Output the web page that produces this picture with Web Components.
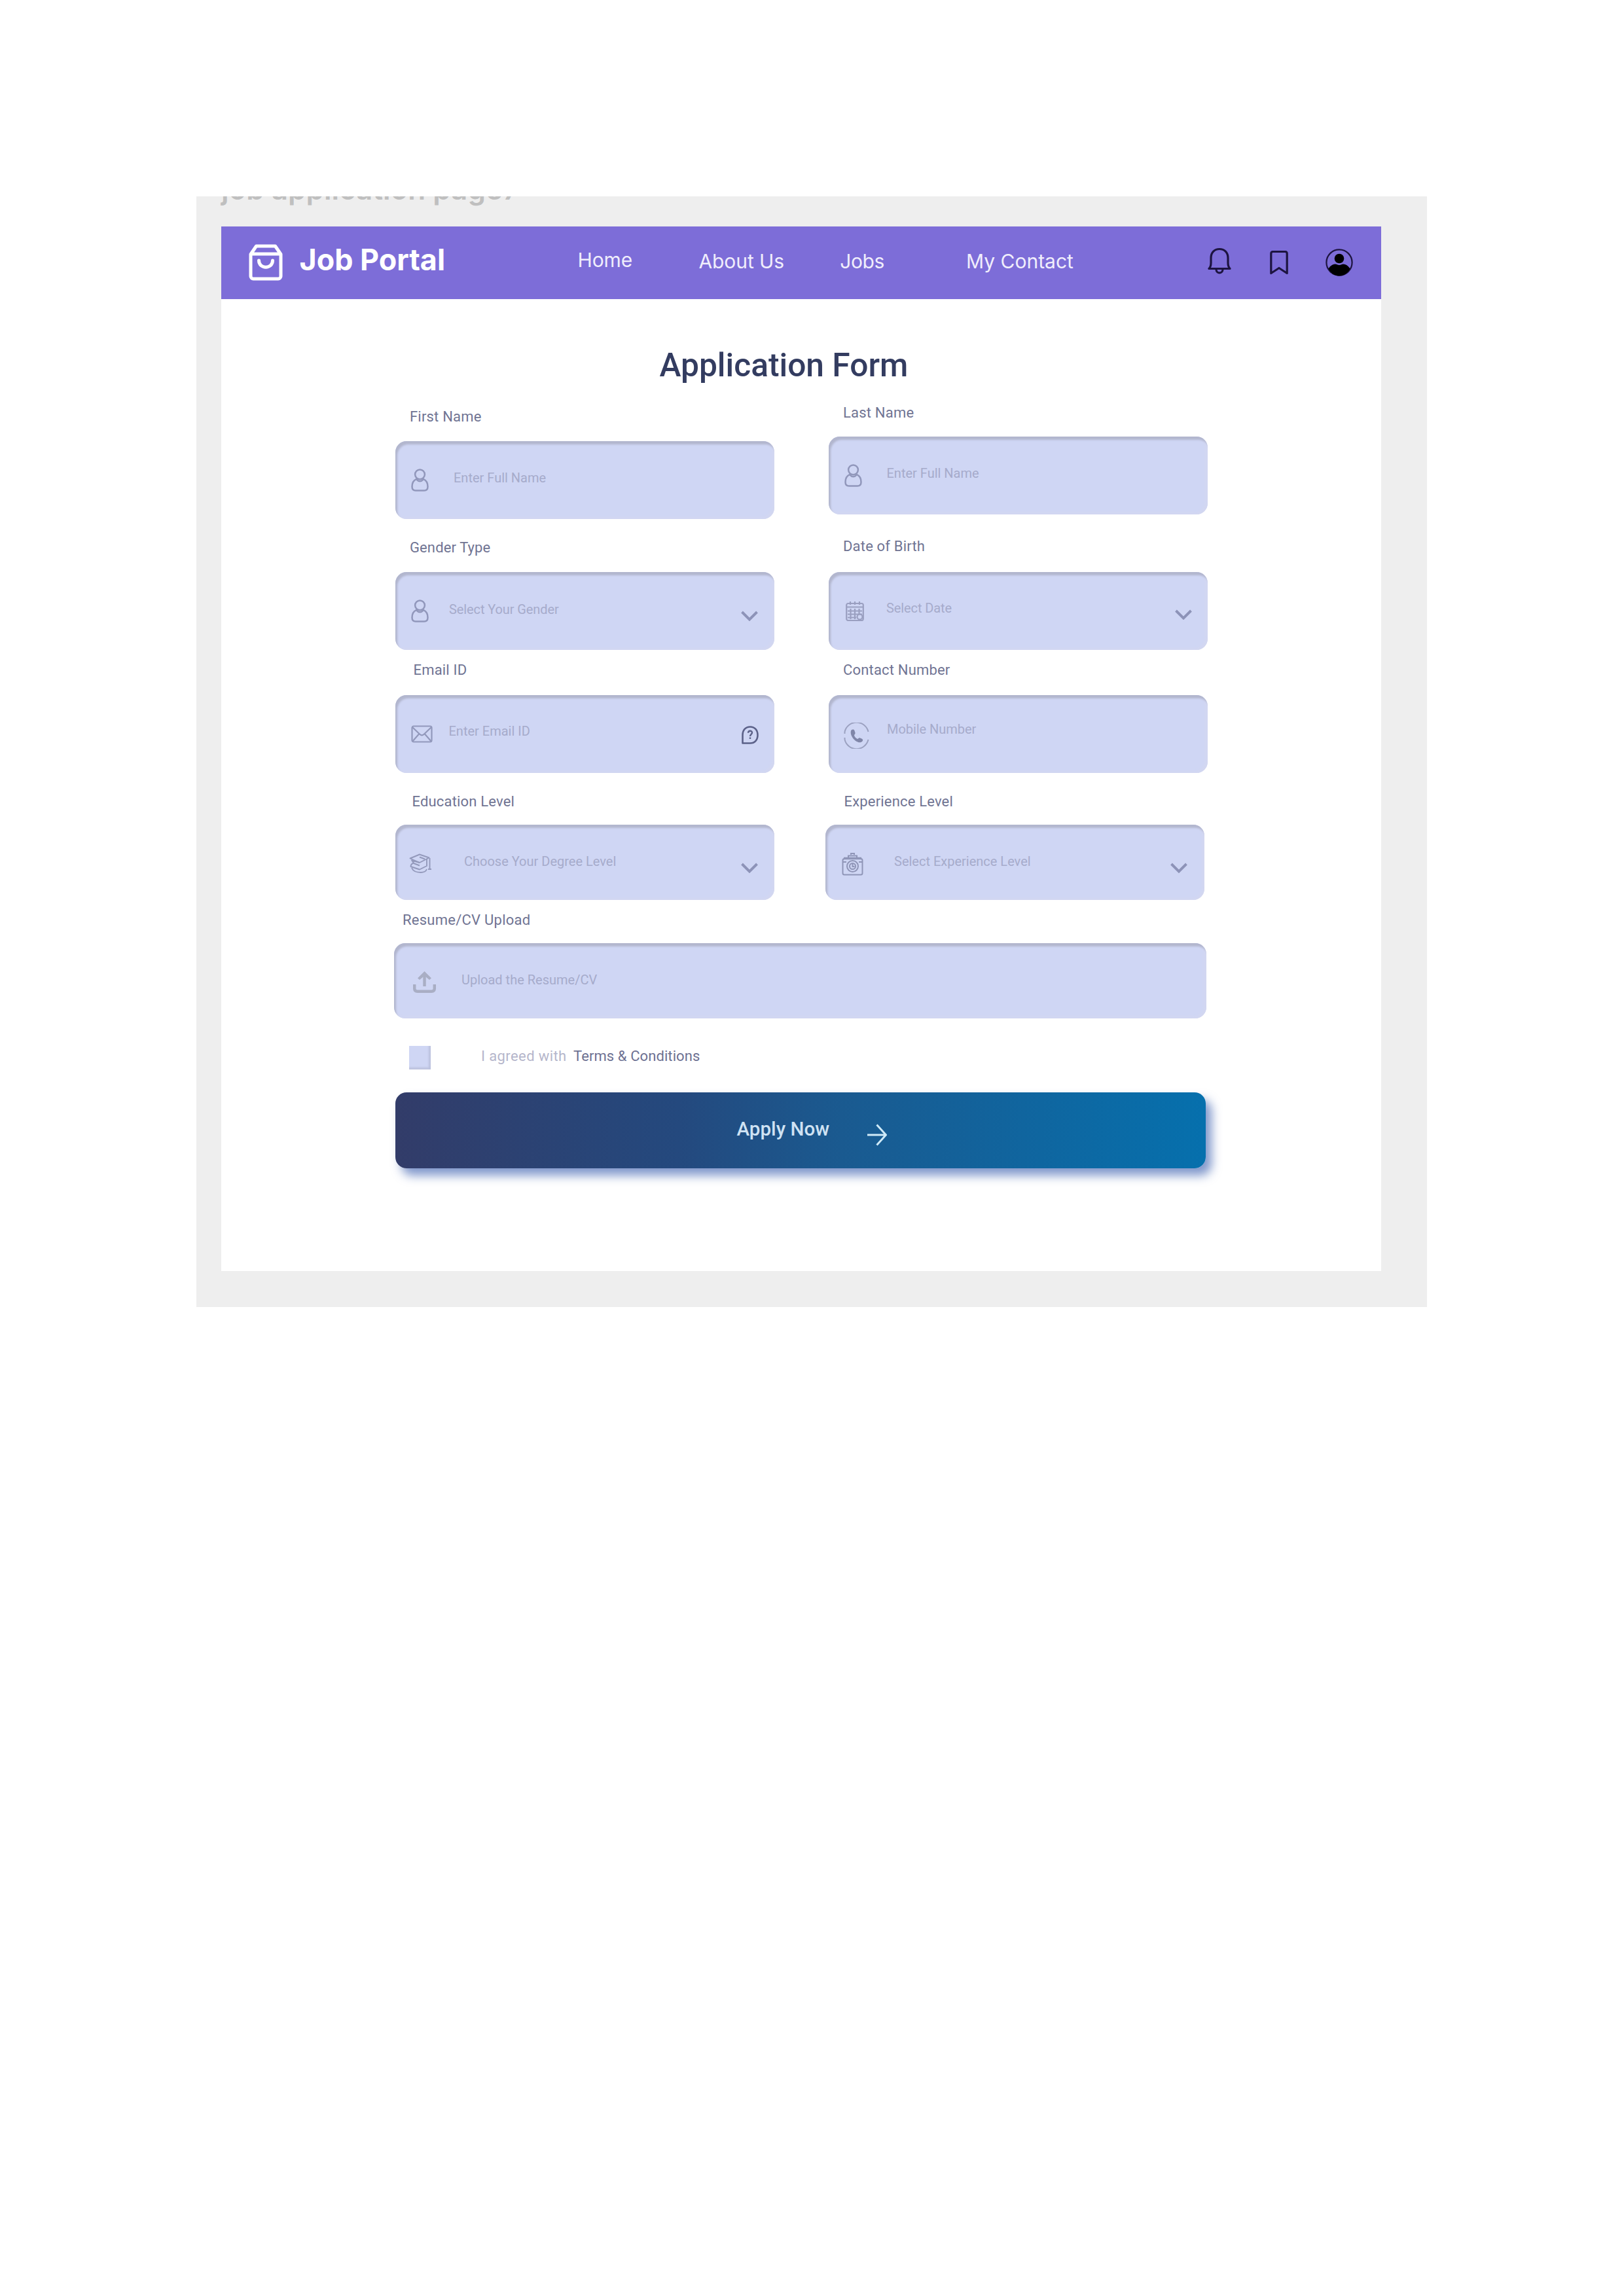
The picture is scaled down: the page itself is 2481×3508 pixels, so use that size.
<!DOCTYPE html>
<html lang="en">
<head>
<meta charset="utf-8">
<title>Job Portal</title>
<style>
html,body{margin:0;background:#fff}
body{width:2481px;height:3508px;overflow:hidden;font-family:Roboto,"Liberation Sans",sans-serif}
</style>
</head>
<body>
<portal-page></portal-page>
<script>
const ICONS = {
  bag: ['0 0 52 56', `<g fill="none" stroke="#fff" stroke-width="5" stroke-linejoin="round" stroke-linecap="round"><path d="M3 15.5 11.5 3h29L49 15.500V49a4 4 0 0 1-4 4H7a4 4 0 0 1-4-4zM3.500 15h45M15.500 25c0 13.500 21 13.500 21 0"/></g>`],
  bell: ['0 0 36 41', `<g fill="none" stroke="#1d1440" stroke-width="3.200" stroke-linejoin="round" stroke-linecap="round"><path d="M2 32.500h32c-3-3-3-6-3-9V16C31 7.500 25.500 2.500 18 2.500S5 7.500 5 16v7.500c0 3 0 6-3 9z"/><path d="M13 34c.5 6.500 9.500 6.500 10 0"/></g>`],
  bookmark: ['0 0 28 37', `<path fill="none" stroke="#1d1440" stroke-width="3.200" stroke-linejoin="round" d="M1.800 34.500V4.500c0-2 1-3 3-3h18.400c2 0 3 1 3 3v30L14 26.500z"/>`],
  account: ['0 0 42 44', `<circle cx="21" cy="22" r="19.600" fill="none" stroke="#1d1440" stroke-width="2.200"/><circle cx="21" cy="16" r="7.300" fill="#000"/><path fill="#000" d="M4.500 31.500c3-4.500 6.500-7 10.500-7 2 0 3.500 1.500 6 1.500s4-1.500 6-1.500c4 0 7.500 2.500 10.500 7C34 38.500 28 42.500 21 42.500S8 38.500 4.500 31.500z"/>`],
  user: ['0 0 27 35', `<g fill="none" stroke="#9197bb" stroke-width="2.500"><circle cx="13.500" cy="8.800" r="7.400"/><path d="M8 16.200C4 18 1.500 22 1.500 27.500c0 4 2 6 5.500 6h13c3.500 0 5.500-2 5.500-6 0-5.500-2.500-9.500-6.500-11.300-3.500 4-7.500 4-11 0z"/></g>`],
  calendar: ['0 0 28 30', `<g fill="none" stroke="#9a9fc0" stroke-width="2.200"><rect x="1.200" y="3" width="25.600" height="26" rx="2.500"/><path d="M1 8.500h26M7 0v5M14 0v5M21 0v5" /><path d="M7.500 11v16M14 11v16M20.500 11v8M3 14.500h22M3 19.500h22M3 24.500h13"/><circle cx="21.500" cy="23.500" r="4"/></g>`],
  mail: ['0 0 33 27', `<g fill="none" stroke="#9298bb" stroke-width="2.200"><rect x="1.500" y="1.500" width="30" height="24" rx="2.500"/><path d="M2 3l11.500 11c2 2 4 2 6 0L31 3M2 25l10-11.500M31 25 21 13.500"/></g>`],
  phone: ['0 0 39 40', `<path fill="none" stroke="#9ba1c0" stroke-width="2" d="M1.500 14a18.500 18.500 0 0 1 36 0M1.500 26a18.500 18.500 0 0 0 36 0M1.500 14v3M1.500 26v-3"/><path fill="#8086a8" d="M11.500 11.500c2-1.500 4-1.500 4.800.5l1.200 3.500c.5 1.800-1.500 2.800-1.500 4 .6 2.500 2.500 4.500 5 5.500 1.200 0 2-2 3.800-1.600l3 1.300c2 1 1.700 2.800.2 4.300-2.500 2.400-6.500 1.500-10.500-1.500-5-4-8.500-11.500-6-16z"/>`],
  cap: ['0 0 34 30', `<g fill="none" stroke="#9399bb" stroke-width="1.900" stroke-linejoin="round"><path d="M1.500 7.500 16 1.500l14.500 5L16 14z"/><path d="M16 14 4 10.500l3 4c-3 1-4.500 3-4.500 5.500L16 24.500 27 19V9M16 18.500 7 15M16 5.500l8 3"/><path d="M4 22c2 5 8 7 14 7 4 0 8-2 9-5M31.500 7v17M29 24h5"/></g>`],
  work: ['0 0 33 35', `<g fill="none" stroke="#8f95b7" stroke-width="2"><rect x="1.500" y="9" width="30" height="24.500" rx="2.500"/><path d="M10 7V4.500h13V7M14 3V1h5v2M2 14h5M26 14h5"/><path stroke-width="3.500" d="M3 8.500h27"/><circle cx="16.500" cy="20.500" r="8.500"/><circle cx="16.500" cy="20.500" r="4.500"/><path d="M16.500 17v4h3"/></g>`],
  upload: ['0 0 35 33', `<g fill="none" stroke="#a9aec4" stroke-width="4.400"><path d="M17.500 23V6M2.200 20v6.500c0 3 1.500 4.300 4.500 4.300h21.600c3 0 4.500-1.300 4.500-4.300V20"/></g><path fill="#a9aec4" d="M17.500 0 28 10.500l-3 2.500-7.500-6-7.500 6-3-2.500z"/>`],
  chevron: ['0 0 26 16', `<path fill="none" stroke="#8d93b8" stroke-width="3.900" d="M1.500 2 13 13.500 24.500 2"/>`],
  help: ['0 0 26 28', `<path fill="none" stroke="#5b6188" stroke-width="2.600" stroke-linejoin="round" d="M1.500 26.500V14C1.500 6.500 6 1.500 13 1.500S24.500 6.500 24.500 14 20 26.500 13 26.500z"/><path fill="none" stroke="#5b6188" stroke-width="2.400" d="M10 10.800c0-4 6-4 6-.5 0 2.500-3 2.500-3 5.700M13 17.500v2.500"/>`],
  arrow: ['0 0 30 34', `<path fill="none" stroke="#cfeaf8" stroke-width="3" d="M0 17h28M14.500 1.500 28.500 17l-14 15.500"/>`]
};

class BaseElement extends HTMLElement {
  render(html) { this.attachShadow({ mode: 'open' }).innerHTML = html; }
}

customElements.define('x-icon', class extends BaseElement {
  connectedCallback() {
    const [box, body] = ICONS[this.getAttribute('name')];
    const [, , w, h] = box.split(' ');
    this.render(`<style>:host{display:block;flex:none;width:${w}px;height:${h}px}svg{display:block;width:100%;height:100%}</style><svg viewBox="${box}">${body}</svg>`);
  }
});

customElements.define('nav-bar', class extends BaseElement {
  connectedCallback() {
    this.render(`<style>
      :host{display:grid;grid-template-columns:544.600px 184.900px 215.700px 192.800px 369.500px 94.500px 85px 85px;align-items:center;box-sizing:border-box;height:111px;padding-bottom:1px;background:#7d6dd8;color:#f0eefc;font:400 30px/36px Inter,sans-serif}
      .brand{display:flex;align-items:center;gap:25.500px;padding-left:42px;color:#fff;white-space:nowrap}
      .brand b{font-size:44.800px;line-height:50px;font-weight:700;padding-bottom:9px}
      .home{padding-bottom:9px;letter-spacing:-.15px}
      .link{padding-bottom:4px}
      .bell{padding-bottom:5px}
    </style>
    <div class="brand"><x-icon name="bag"></x-icon><b>Job Portal</b></div>
    <span class="home">Home</span><span class="link" style="letter-spacing:-.1px">About Us</span><span class="link" style="letter-spacing:-.4px">Jobs</span><span class="link">My Contact</span>
    <x-icon class="bell" name="bell"></x-icon><x-icon name="bookmark"></x-icon><x-icon name="account"></x-icon>`);
  }
});

customElements.define('form-field', class extends BaseElement {
  connectedCallback() {
    const a = n => this.getAttribute(n);
    const tail = a('tail') ? `<x-icon class="tail" name="${a('tail')}"></x-icon>` : '';
    this.render(`<style>
      :host{display:block;color:#707493;white-space:nowrap}
      label{display:block;height:26px;font-size:22px;line-height:26px;letter-spacing:var(--ls,.180px);padding-left:var(--lx)}
      .box{display:flex;align-items:flex-start;box-sizing:border-box;margin-top:var(--gap);margin-left:var(--shift,0);height:var(--h,119px);width:var(--w,579px);border-radius:17px;background:#cfd6f4;box-shadow:inset 3px 5px 3px #b2b6ce,inset -3px -2px 4px #d3d7f0}
      .slot{width:var(--tx);flex:none;display:flex}
      .lead{margin:var(--iy) 0 0 var(--ix)}
      .ph{font-size:20px;line-height:26px;color:#a6abcb;letter-spacing:var(--ps,0);margin-top:var(--ty)}
      .tail{margin:var(--cy) var(--cx) 0 auto}
    </style>
    <label>${a('label')}</label>
    <div class="box"><div class="slot"><x-icon class="lead" name="${a('icon')}"></x-icon></div><span class="ph">${a('placeholder')}</span>${tail}</div>`);
  }
});

customElements.define('terms-row', class extends BaseElement {
  connectedCallback() {
    this.render(`<style>
      :host{display:flex;align-items:flex-start;margin:42px 0 0 21px;height:36px;font-size:22px;line-height:31px;color:#6d7192;white-space:nowrap}
      i{width:33px;height:36px;background:#cfd6f4;box-shadow:inset -3px -3px 3px #bcc2de}
      .agree{color:#b5b6cb;width:141px;margin-left:77px;letter-spacing:.400px}
      .terms{letter-spacing:.090px}
    </style><i></i><span class="agree">I agreed with</span><span class="terms">Terms &amp; Conditions</span>`);
  }
});

customElements.define('apply-button', class extends BaseElement {
  connectedCallback() {
    this.render(`<style>
      :host{display:flex;align-items:flex-start;box-sizing:border-box;width:1238px;height:116px;margin-top:35px;margin-left:-.500px;padding-left:522px;border-radius:17px;background:linear-gradient(90deg,#323c69,#24497e 35%,#1a5a90 55%,#0670ad);box-shadow:9px 11px 15px rgba(60,95,175,.65);color:#cfe2f3;font-size:29.500px;line-height:36px;font-weight:500;letter-spacing:.050px}
      span{margin-top:38px;width:199px;white-space:nowrap}
      x-icon{margin-top:48px}
    </style><span>Apply Now</span><x-icon name="arrow"></x-icon>`);
  }
});

customElements.define('application-form', class extends BaseElement {
  connectedCallback() {
    this.render(`<style>
      :host{display:block;width:1241px;margin-left:266px;padding-top:71px}
      h1{margin:0;padding-left:403.500px;font-size:49.700px;line-height:60px;height:59px;font-weight:500;color:#333c60;white-space:nowrap}
      .cols{display:flex;gap:83px}
      .col{display:flex;flex-direction:column;width:579px}
    </style>
    <h1>Application Form</h1>
    <div class="cols">
      <div class="col">
        <form-field label="First Name" placeholder="Enter Full Name" icon="user" style="margin-top:36.500px;--lx:22px;--gap:24.500px;--ls:.200px;--ix:24px;--iy:42px;--tx:89px;--ty:42.600px"></form-field>
        <form-field label="Gender Type" placeholder="Select Your Gender" icon="user" tail="chevron" style="margin-top:30.500px;--lx:22px;--gap:24.500px;--ls:.110px;--ix:24px;--iy:42px;--tx:82px;--ty:43.500px;--ps:-.100px;--cx:25px;--cy:59px"></form-field>
        <form-field label="Email ID" placeholder="Enter Email ID" icon="mail" tail="help" style="margin-top:18px;--lx:27.500px;--gap:24.500px;--h:119.500px;--ix:24px;--iy:46px;--tx:81.500px;--ty:42.500px;--cx:24px;--cy:47px"></form-field>
        <form-field label="Education Level" placeholder="Choose Your Degree Level" icon="cap" tail="chevron" style="margin-top:31px;--lx:25.500px;--gap:22px;--h:115px;--ix:21px;--iy:44px;--tx:105px;--ty:42.500px;--cx:25px;--cy:58px"></form-field>
      </div>
      <div class="col">
        <form-field label="Last Name" placeholder="Enter Full Name" icon="user" style="margin-top:30.500px;--lx:22px;--gap:23.500px;--ls:.200px;--ix:24px;--iy:42px;--tx:88.500px;--ty:43px"></form-field>
        <form-field label="Date of Birth" placeholder="Select Date" icon="calendar" tail="chevron" style="margin-top:36px;--lx:22px;--gap:26px;--ix:26px;--iy:45px;--tx:88px;--ty:41.500px;--ps:-.100px;--cx:24px;--cy:57px"></form-field>
        <form-field label="Contact Number" placeholder="Mobile Number" icon="phone" style="margin-top:18px;--lx:22px;--gap:24.500px;--h:119.500px;--ix:23px;--iy:42px;--tx:89px;--ty:39.500px;--ps:-.050px"></form-field>
        <form-field label="Experience Level" placeholder="Select Experience Level" icon="work" tail="chevron" style="margin-top:31px;--lx:23.500px;--gap:22px;--h:115px;--shift:-5px;--ix:25px;--iy:43px;--tx:105px;--ty:42.500px;--cx:26px;--cy:58px"></form-field>
      </div>
    </div>
    <form-field label="Resume/CV Upload" placeholder="Upload the Resume/CV" icon="upload" style="margin-top:17.500px;--lx:11px;--gap:22.500px;--h:115px;--w:1241px;--ls:.250px;--shift:-2px;--ix:29px;--iy:43px;--tx:103px;--ty:43px"></form-field>
    <terms-row></terms-row>
    <apply-button></apply-button>`);
  }
});

customElements.define('portal-page', class extends BaseElement {
  connectedCallback() {
    this.render(`<style>
      :host{display:block;padding:300px 0 0 300px}
      .canvas{width:1880px;height:1697px;background:#eee;overflow:hidden}
      .name{height:46px;margin:-34px 0 34px 38px;font:600 44px/46px Inter,sans-serif;color:#bfbfbf;white-space:nowrap}
      .frame{width:1772px;height:1596px;margin-left:38px;background:#fff}
    </style>
    <div class="canvas"><div class="name">job application page7</div>
    <div class="frame"><nav-bar></nav-bar><application-form></application-form></div></div>`);
  }
});
</script>
</body>
</html>
